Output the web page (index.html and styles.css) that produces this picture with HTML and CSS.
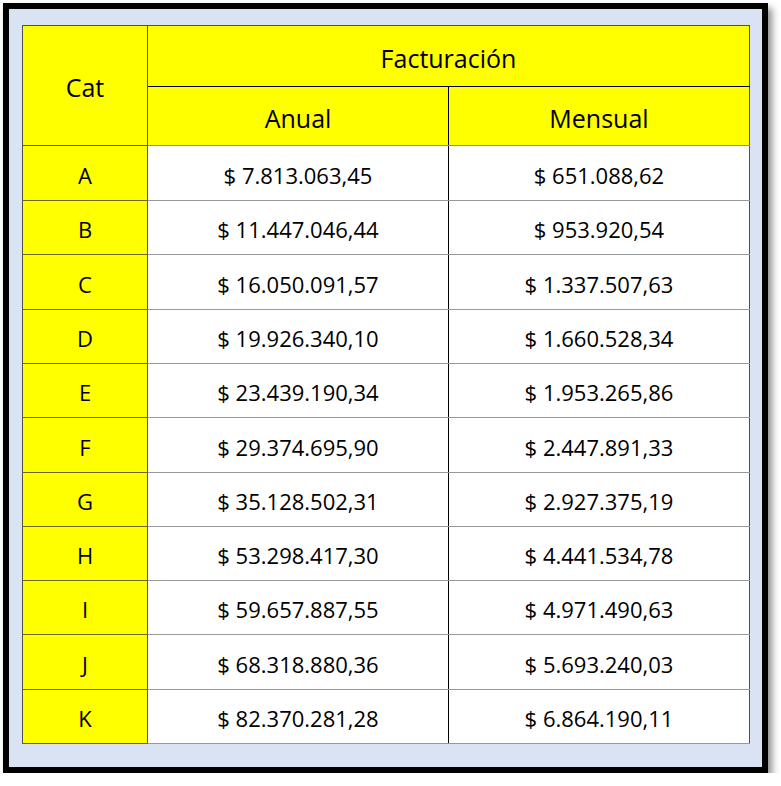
FILE: index.html
```html
<!DOCTYPE html>
<html lang="es">
<head>
<meta charset="utf-8">
<title>Facturación</title>
<link rel="stylesheet" href="styles.css">
</head>
<body>
<div class="frame">
  <table class="grid">
    <colgroup>
      <col class="c-cat">
      <col class="c-anual">
      <col class="c-mensual">
    </colgroup>
    <thead>
      <tr class="h1">
        <th class="cat-head" rowspan="2">Cat</th>
        <th class="fact" colspan="2">Facturación</th>
      </tr>
      <tr class="h2">
        <th class="sub sub-a">Anual</th>
        <th class="sub sub-m">Mensual</th>
      </tr>
    </thead>
    <tbody>
      <tr class="r55"><td class="cat">A</td><td class="val va">$ 7.813.063,45</td><td class="val vm">$ 651.088,62</td></tr>
      <tr class="r54"><td class="cat">B</td><td class="val va">$ 11.447.046,44</td><td class="val vm">$ 953.920,54</td></tr>
      <tr class="r55"><td class="cat">C</td><td class="val va">$ 16.050.091,57</td><td class="val vm">$ 1.337.507,63</td></tr>
      <tr class="r54"><td class="cat">D</td><td class="val va">$ 19.926.340,10</td><td class="val vm">$ 1.660.528,34</td></tr>
      <tr class="r54"><td class="cat">E</td><td class="val va">$ 23.439.190,34</td><td class="val vm">$ 1.953.265,86</td></tr>
      <tr class="r55"><td class="cat">F</td><td class="val va">$ 29.374.695,90</td><td class="val vm">$ 2.447.891,33</td></tr>
      <tr class="r54"><td class="cat">G</td><td class="val va">$ 35.128.502,31</td><td class="val vm">$ 2.927.375,19</td></tr>
      <tr class="r54"><td class="cat">H</td><td class="val va">$ 53.298.417,30</td><td class="val vm">$ 4.441.534,78</td></tr>
      <tr class="r54"><td class="cat">I</td><td class="val va">$ 59.657.887,55</td><td class="val vm">$ 4.971.490,63</td></tr>
      <tr class="r55"><td class="cat">J</td><td class="val va">$ 68.318.880,36</td><td class="val vm">$ 5.693.240,03</td></tr>
      <tr class="r54"><td class="cat">K</td><td class="val va">$ 82.370.281,28</td><td class="val vm">$ 6.864.190,11</td></tr>
    </tbody>
  </table>
</div>
</body>
</html>
```
FILE: styles.css
```css
html, body {
  margin: 0;
  padding: 0;
  background: #ffffff;
}

body {
  font-family: "Open Sans", "Liberation Sans", sans-serif;
  color: #000000;
}

.frame {
  box-sizing: border-box;
  margin: 3px 0 0 3px;
  width: 765px;
  height: 770px;
  border: 6px solid #000000;
  background: #dae3f3;
  padding: 16px 14px 0 13px;
  box-shadow: 4px 5px 7px rgba(0, 0, 0, 0.45);
}

.grid {
  border-collapse: collapse;
  table-layout: fixed;
  width: 727px;
  border: 1px solid #505050;
}

.c-cat { width: 125px; }
.c-anual { width: 301px; }
.c-mensual { width: 301px; }

.grid th,
.grid td {
  padding: 3px 0 0 0;
  text-align: center;
  vertical-align: middle;
  font-weight: 400;
  white-space: nowrap;
}

.grid th {
  background: #ffff00;
  font-size: 25px;
}

.h1 { height: 61px; }
.h2 { height: 59px; }

.cat-head {
  border-right: 1px solid #5c5c00;
  border-bottom: 1px solid #5c5c00;
}

.fact {
  border-bottom: 1px solid #000000;
}

.sub {
  font-size: 26px;
  border-bottom: 1px solid #8c8c8c;
}

.sub-a {
  border-right: 1px solid #000000;
}

.r55 { height: 55px; }
.r54 { height: 54px; }

.grid td {
  font-size: 22px;
}

.cat {
  background: #ffff00;
  border-right: 1px solid #5c5c00;
  border-bottom: 1px solid #6a6a00;
}

.val {
  background: #ffffff;
  border-bottom: 1px solid #999999;
}

.va {
  border-right: 1px solid #000000;
}
```
